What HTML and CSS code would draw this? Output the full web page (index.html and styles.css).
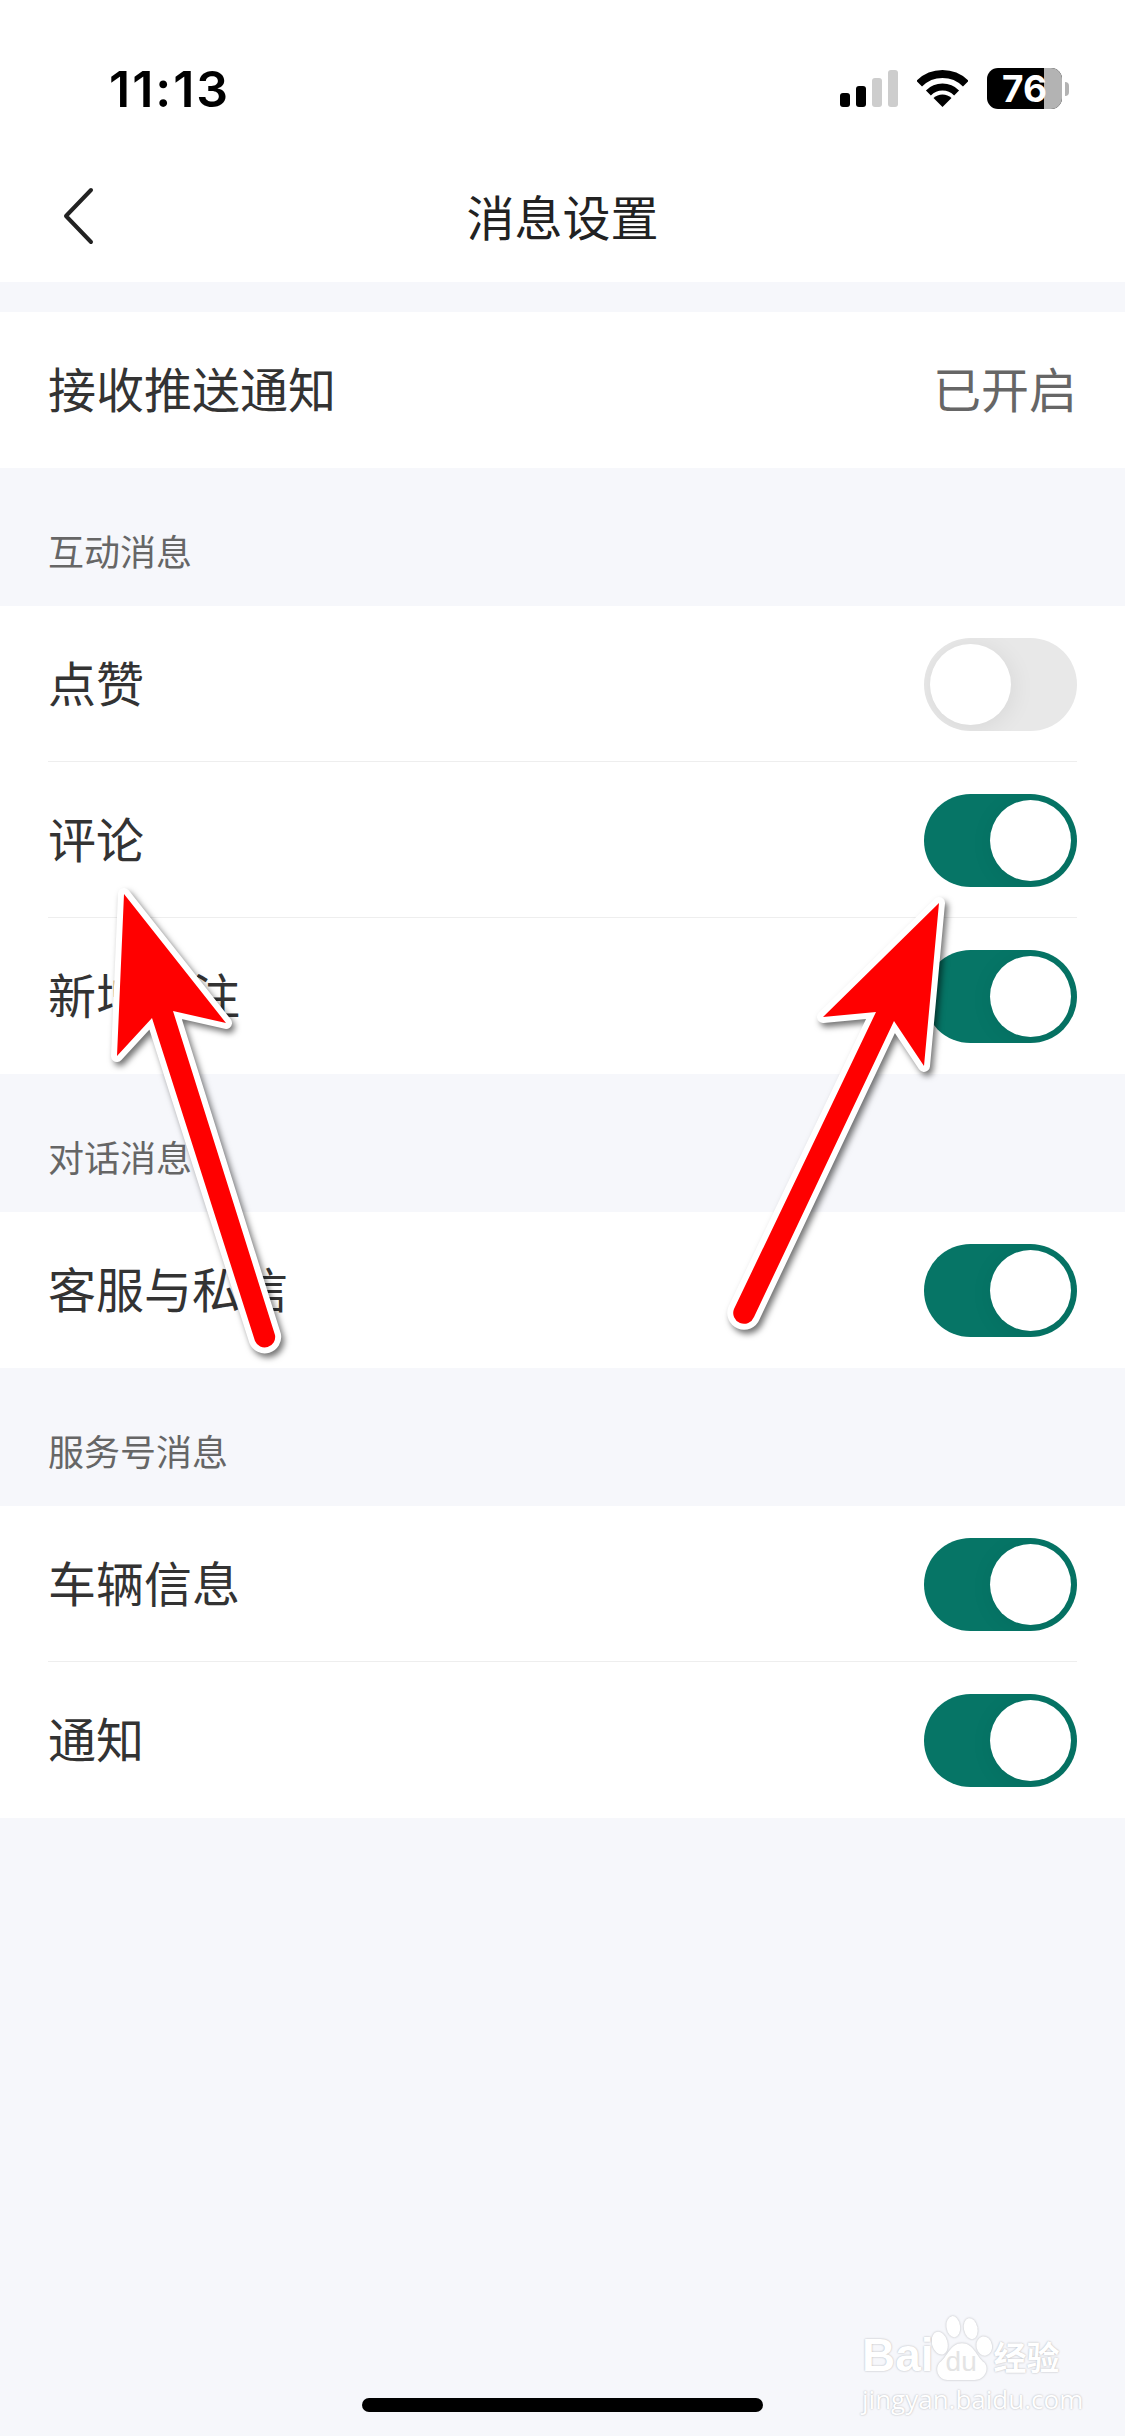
FILE: index.html
```html
<!DOCTYPE html>
<html lang="zh">
  <head>
    <meta charset="UTF-8" />
    <title>消息设置</title>
    <link rel="stylesheet" href="styles.css">
  </head>
  <body>
    <div class="page">
      <header class="header">
        <div class="status-bar">
          <span class="time">11:13</span>
          <div class="status-icons">
            <div class="signal">
              <span class="bar bar-1"></span>
              <span class="bar bar-2"></span>
              <span class="bar bar-3"></span>
              <span class="bar bar-4"></span>
            </div>
            <svg class="wifi" width="51" height="37" viewBox="0 0 51 37">
              <path d="M2.200 13.700A33 33 0 0 1 48.800 13.700" fill="none" stroke="#000" stroke-width="8" />
              <path d="M11.400 22.900A20 20 0 0 1 39.600 22.900" fill="none" stroke="#000" stroke-width="7" />
              <path d="M25.500 37L16.500 28A13 13 0 0 1 34.500 28Z" fill="#000" />
            </svg>
            <div class="battery">
              <div class="battery-body">
                <span class="battery-level"></span>
                <span class="battery-text">76</span>
              </div>
              <span class="battery-nub"></span>
            </div>
          </div>
        </div>
        <nav class="nav">
          <svg class="back" width="34" height="60" viewBox="0 0 34 60">
            <path d="M31 4L6 30L31 56" fill="none" stroke="#222" stroke-width="4" stroke-linecap="round" stroke-linejoin="round" />
          </svg>
          <h1 class="title">消息设置</h1>
        </nav>
      </header>

      <section class="group group-first">
        <div class="row">
          <span class="label">接收推送通知</span>
          <span class="label row-value">已开启</span>
        </div>
      </section>

      <h2 class="section-title">互动消息</h2>
      <section class="group">
        <div class="row">
          <span class="label">点赞</span>
          <div class="switch switch-off"><span class="knob"></span></div>
        </div>
        <div class="row">
          <span class="label">评论</span>
          <div class="switch"><span class="knob"></span></div>
        </div>
        <div class="row">
          <span class="label">新增关注</span>
          <div class="switch"><span class="knob"></span></div>
        </div>
      </section>

      <h2 class="section-title">对话消息</h2>
      <section class="group">
        <div class="row">
          <span class="label">客服与私信</span>
          <div class="switch"><span class="knob"></span></div>
        </div>
      </section>

      <h2 class="section-title">服务号消息</h2>
      <section class="group">
        <div class="row">
          <span class="label">车辆信息</span>
          <div class="switch"><span class="knob"></span></div>
        </div>
        <div class="row">
          <span class="label">通知</span>
          <div class="switch"><span class="knob"></span></div>
        </div>
      </section>

      <div class="home-indicator"></div>

      <!-- 截图上的红色箭头 -->
      <svg class="arrows" width="1125" height="2436" viewBox="0 0 1125 2436">
        <path class="arrow" d="M124 894L226 1023L173 1011L275 1335A10.500 10.500 0 0 1 255 1341L152 1018L117 1056Z" />
        <path class="arrow" d="M939 903L924 1066L894 1021L754 1317A10.500 10.500 0 0 1 734 1309L876 1012L823 1017Z" />
      </svg>

      <!-- 水印 -->
      <div class="watermark">
        <div class="wm-logo">
          <span class="wm-bai">Bai</span>
          <div class="wm-paw">
            <svg width="60" height="64" viewBox="0 0 62 66">
              <ellipse cx="8" cy="28" rx="8" ry="12" transform="rotate(-15 8 28)" />
              <ellipse cx="22" cy="11" rx="7" ry="11" transform="rotate(-8 22 11)" />
              <ellipse cx="40" cy="13" rx="7" ry="11" transform="rotate(-12 40 13)" />
              <ellipse cx="54" cy="31" rx="8" ry="10" transform="rotate(-10 54 31)" />
              <path d="M31 28C43 28 46 42 54 48C60 55 54 66 44 66L16 66C7 66 2 55 8 48C16 42 19 28 31 28Z" />
            </svg>
            <span class="wm-du">du</span>
          </div>
          <span class="wm-cn">经验</span>
        </div>
        <div class="wm-url">jingyan.baidu.com</div>
      </div>
    </div>
  </body>
</html>
```

FILE: styles.css
```css
body {
  margin: 0;
  padding: 0;
  font-family: "Noto Sans CJK SC", "Liberation Sans", sans-serif;
}

.page {
  position: relative;
  width: 1125px;
  height: 2436px;
  overflow: hidden;
  display: flex;
  flex-direction: column;
  background: #f6f7fb;
}

.header {
  height: 282px;
  background: #fff;
}

/* 状态栏 */
.status-bar {
  height: 142px;
  box-sizing: border-box;
  padding: 68px 56px 0 109px;
  display: flex;
  justify-content: space-between;
  align-items: flex-start;
}

.time {
  font-family: Inter, sans-serif;
  font-size: 50px;
  font-weight: 600;
  line-height: 42px;
  letter-spacing: 2px;
  color: #000;
}

.status-icons {
  display: flex;
  align-items: flex-start;
}

.signal {
  display: flex;
  align-items: flex-end;
  gap: 6px;
  height: 37px;
  margin-top: 2px;
  margin-right: 19px;
}

.bar {
  width: 10px;
  border-radius: 3px;
  background: #cdcdcd;
}

.bar-1 {
  height: 14px;
  background: #000;
}

.bar-2 {
  height: 21px;
  background: #000;
}

.bar-3 {
  height: 29px;
}

.bar-4 {
  height: 37px;
}

.wifi {
  margin-top: 2px;
  margin-right: 19px;
}

.battery {
  display: flex;
  align-items: center;
}

.battery-body {
  position: relative;
  width: 75px;
  height: 41px;
  border-radius: 11px;
  background: #000;
  display: flex;
  align-items: center;
  padding-left: 15px;
  box-sizing: border-box;
}

.battery-level {
  position: absolute;
  top: 0;
  right: 0;
  bottom: 0;
  width: 18px;
  border-radius: 0 11px 11px 0;
  background: #b3b3b3;
}

.battery-text {
  position: relative;
  font-family: Inter, sans-serif;
  font-size: 37px;
  font-weight: 700;
  line-height: 41px;
  color: #fff;
}

.battery-nub {
  width: 4px;
  height: 14px;
  margin-left: 3px;
  border-radius: 0 4px 4px 0;
  background: #b3b3b3;
}

/* 导航栏 */
.nav {
  position: relative;
  height: 140px;
  display: flex;
  align-items: center;
  justify-content: center;
}

.back {
  position: absolute;
  left: 60px;
  top: 44px;
}

.title {
  margin: 6px 0 0;
  font-size: 48px;
  font-weight: 400;
  color: #222;
}

/* 列表 */
.group {
  padding: 0 48px;
  background: #fff;
}

.group-first {
  margin-top: 30px;
}

.row {
  height: 156px;
  box-sizing: border-box;
  display: flex;
  align-items: center;
  justify-content: space-between;
  font-size: 48px;
  color: #333;
  border-bottom: 1px solid #eeeeee;
}

.row:last-child {
  border-bottom: none;
}

.label {
  margin-top: -6px;
}

.row-value {
  color: #666;
}

.section-title {
  margin: 0;
  height: 138px;
  box-sizing: border-box;
  padding: 64px 48px 0;
  font-size: 36px;
  font-weight: 400;
  line-height: 36px;
  color: #666;
}

/* 开关 */
.switch {
  width: 153px;
  height: 93px;
  margin-top: 1px;
  box-sizing: border-box;
  padding: 6px;
  border-radius: 47px;
  overflow: hidden;
  display: flex;
  justify-content: flex-end;
  background: #067566;
}

.switch-off {
  justify-content: flex-start;
  background: #e8e8e8;
}

.knob {
  width: 81px;
  height: 81px;
  border-radius: 50%;
  background: #fff;
  box-shadow: 2px 3px 24px rgba(0, 0, 0, 0.07);
}

.home-indicator {
  width: 401px;
  height: 14px;
  margin: auto auto 24px;
  border-radius: 7px;
  background: #000;
}

/* 箭头 */
.arrows {
  position: absolute;
  left: 0;
  top: 0;
  pointer-events: none;
  filter: drop-shadow(3px 4px 3px rgba(0, 0, 0, 0.55));
}

.arrow {
  fill: #ff0000;
  stroke: #fff;
  stroke-width: 12px;
  stroke-linejoin: round;
  paint-order: stroke;
}

/* 水印 */
.watermark {
  position: absolute;
  left: 862px;
  top: 2316px;
  width: 210px;
  color: #fff;
  font-family: "Liberation Sans", sans-serif;
}

.wm-logo {
  display: flex;
  align-items: flex-end;
  height: 64px;
}

.wm-bai {
  font-size: 46px;
  font-weight: 700;
  line-height: 50px;
  text-shadow: 0 0 2px rgba(0, 0, 0, 0.3);
}

.wm-paw {
  position: relative;
  width: 60px;
  height: 64px;
  margin-left: -2px;
}

.wm-paw svg {
  fill: #fff;
  filter: drop-shadow(0 0 1px rgba(0, 0, 0, 0.25));
}

.wm-du {
  position: absolute;
  left: 14px;
  bottom: 4px;
  font-size: 28px;
  line-height: 28px;
  color: #e4e4e4;
}

.wm-cn {
  font-family: "Noto Sans CJK SC", sans-serif;
  font-size: 33px;
  font-weight: 700;
  line-height: 48px;
  margin-left: 2px;
  text-shadow: 0 0 2px rgba(0, 0, 0, 0.3);
}

.wm-url {
  margin-top: 4px;
  font-family: "Open Sans", sans-serif;
  font-size: 26px;
  line-height: 30px;
  text-shadow: 0 0 2px rgba(0, 0, 0, 0.3);
}
```
